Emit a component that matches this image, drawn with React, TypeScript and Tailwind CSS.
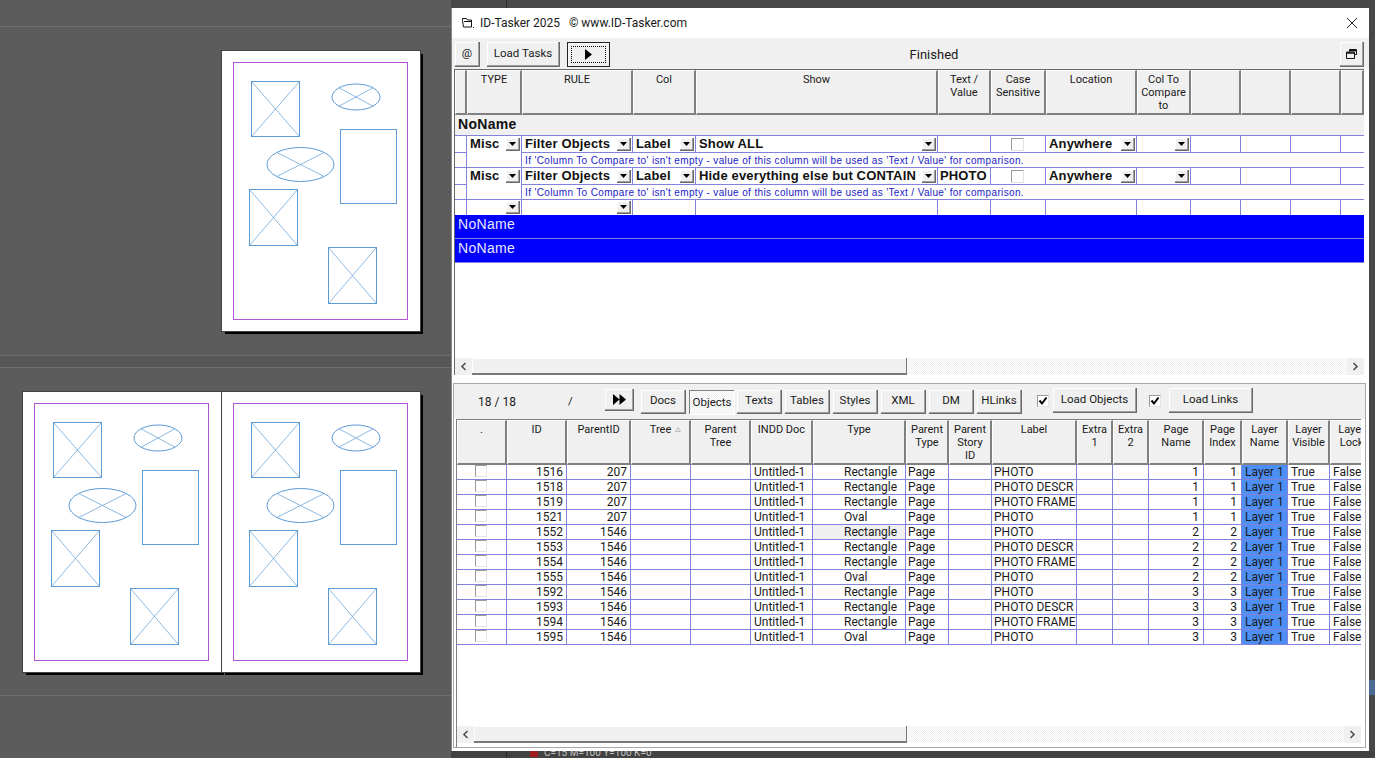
import type { ReactNode } from "react";

const btn =
  "flex items-center justify-center bg-[#f0f0f0] border-r border-b border-[#696969] shadow-[inset_-1px_-1px_0_#a0a0a0,inset_1px_1px_0_#fff]";
const headCell =
  "border-r-2 border-b-2 border-[#808080] border-l border-t border-l-white border-t-white bg-[#f0f0f0] text-center pt-[2px] text-[11px] leading-[13px] text-[#1a1a1a] whitespace-pre-line overflow-hidden";

const topCols = "grid grid-cols-[12px_55px_111px_63px_242px_53px_55px_91px_54px_50px_50px_50px_23px]";
const lowCols = "grid grid-cols-[50px_60px_64px_60px_60px_62px_93px_43px_43px_85px_36px_36px_55px_38px_46px_42px_44px]";

function Arrow() {
  return (
    <span className={`${btn} w-[14px] h-[13px] shrink-0`}>
      <svg width="7" height="4" viewBox="0 0 7 4">
        <path d="M0 0h7L3.5 4z" fill="#000" />
      </svg>
    </span>
  );
}

function Check({ on, big }: { on?: boolean; big?: boolean }) {
  return (
    <span className={`block ${big ? "w-[13px] h-[13px]" : "w-[12px] h-[12px]"} bg-white border-l border-t border-[#9a9a9a] border-r-[#e4e4e4] border-b-[#e4e4e4] border-r border-b`}>
      {on && (
        <svg width="10" height="10" viewBox="0 0 10 10">
          <path d="M1.5 4.5l2.5 3 4.5-6" stroke="#000" strokeWidth="2" fill="none" />
        </svg>
      )}
    </span>
  );
}

function Cell({ children, arrow, cls = "" }: { children?: ReactNode; arrow?: boolean; cls?: string }) {
  return (
    <div className={`flex items-center border-r border-b border-[#8282dc] overflow-hidden ${arrow ? "pr-[1px]" : ""} ${cls}`}>
      <span className="flex-1 whitespace-nowrap overflow-hidden">{children}</span>
      {arrow && <Arrow />}
    </div>
  );
}

function TaskRow({ show, text }: { show: string; text?: string }) {
  return (
    <>
      <div className={`${topCols} h-[17px] text-[13px] font-bold tracking-[0.15px] text-[#111]`}>
        <div className="border-r border-b border-[#8282dc]" />
        <Cell arrow cls="pl-[3px] pb-[1px] border-b-0">Misc</Cell>
        <Cell arrow cls="pl-[3px]">Filter Objects</Cell>
        <Cell arrow cls="pl-[3px]">Label</Cell>
        <Cell arrow cls="pl-[3px]">{show}</Cell>
        <Cell cls="pl-[2px]">{text}</Cell>
        <div className="flex items-center justify-center pr-[2px] border-r border-b border-[#8282dc]"><Check big /></div>
        <Cell arrow cls="pl-[3px]">Anywhere</Cell>
        <Cell arrow />
        <Cell />
        <Cell />
        <Cell />
        <div className="border-b border-[#8282dc]" />
      </div>
      <div className="flex h-[15px] border-b border-[#8282dc]">
        <div className="w-[12px] border-r border-[#8282dc]" />
        <div className="w-[55px] border-r border-[#8282dc]" />
        <div className="pl-[3px] text-[10px] leading-[15px] tracking-[0.36px] text-[#2222c8] whitespace-nowrap">
          If 'Column To Compare to' isn't empty - value of this column will be used as 'Text / Value' for comparison.
        </div>
      </div>
    </>
  );
}

function ScrollBar({ thumb }: { thumb: string }) {
  return (
    <div className="flex h-[17px] shrink-0">
      <span className="w-[17px] flex items-center justify-center bg-[#f0f0f0]">
        <svg width="7" height="9" viewBox="0 0 7 9"><path d="M5.5 1L2 4.5 5.5 8" stroke="#505050" strokeWidth="1.6" fill="none" /></svg>
      </span>
      <span className={`${thumb} bg-[#f0f0f0] border-b-2 border-r border-[#777] shadow-[inset_1px_1px_0_#fff]`} />
      <span className="flex-1 bg-[repeating-conic-gradient(#f0f0f0_0_25%,#fff_0_50%)] bg-[length:2px_2px]" />
      <span className="w-[17px] flex items-center justify-center bg-[#f0f0f0]">
        <svg width="7" height="9" viewBox="0 0 7 9"><path d="M1.5 1L5 4.5 1.5 8" stroke="#505050" strokeWidth="1.6" fill="none" /></svg>
      </span>
    </div>
  );
}

function PageArt({ cls, dx = 0 }: { cls: string; dx?: number }) {
  const box = (x: number, y: number, w: number, h: number) => (
    <g>
      <rect x={x} y={y} width={w} height={h} />
      <path d={`M${x} ${y}L${x + w} ${y + h}M${x + w} ${y}L${x} ${y + h}`} strokeWidth="0.7" />
    </g>
  );
  const oval = (cx: number, cy: number, rx: number, ry: number) => (
    <g>
      <ellipse cx={cx} cy={cy} rx={rx} ry={ry} />
      <path
        d={`M${cx - rx * 0.7} ${cy - ry * 0.7}L${cx + rx * 0.7} ${cy + ry * 0.7}M${cx + rx * 0.7} ${cy - ry * 0.7}L${cx - rx * 0.7} ${cy + ry * 0.7}`}
        strokeWidth="0.7"
      />
    </g>
  );
  return (
    <div className={`absolute w-[198px] h-[280px] bg-white shadow-[3px_3px_0_#000] outline outline-1 outline-[#444] ${cls}`}>
      <svg width="198" height="280" viewBox="0 0 198 280" fill="none">
        <rect x="11.5" y="11.5" width="174" height="257" stroke="#b455d8" />
        <g stroke="#5b9bd5" strokeWidth="1" transform={`translate(${dx} 0)`}>
          {box(29.5, 30.5, 48, 55)}
          {oval(134, 46, 24, 13)}
          <rect x="118.5" y="78.5" width="56" height="74" />
          {oval(78.5, 113.5, 33.5, 17)}
          {box(27.5, 138.5, 48, 56)}
          {box(106.5, 196.5, 48, 56)}
        </g>
      </svg>
    </div>
  );
}

const rows = [
  ["1516", "207", "Rectangle", "PHOTO", "1"],
  ["1518", "207", "Rectangle", "PHOTO DESCR", "1"],
  ["1519", "207", "Rectangle", "PHOTO FRAME", "1"],
  ["1521", "207", "Oval", "PHOTO", "1"],
  ["1552", "1546", "Rectangle", "PHOTO", "2"],
  ["1553", "1546", "Rectangle", "PHOTO DESCR", "2"],
  ["1554", "1546", "Rectangle", "PHOTO FRAME", "2"],
  ["1555", "1546", "Oval", "PHOTO", "2"],
  ["1592", "1546", "Rectangle", "PHOTO", "3"],
  ["1593", "1546", "Rectangle", "PHOTO DESCR", "3"],
  ["1594", "1546", "Rectangle", "PHOTO FRAME", "3"],
  ["1595", "1546", "Oval", "PHOTO", "3"],
];

const lowHeads = [
  ".", "ID", "ParentID", "Tree", "Parent\nTree", "INDD Doc", "Type", "Parent\nType", "Parent\nStory\nID",
  "Label", "Extra\n1", "Extra\n2", "Page\nName", "Page\nIndex", "Layer\nName", "Layer\nVisible", "Layer\nLock",
];

const topHeads = ["", "TYPE", "RULE", "Col", "Show", "Text /\nValue", "Case\nSensitive", "Location", "Col To\nCompare\nto", "", "", "", ""];

const tabs = ["Docs", "Objects", "Texts", "Tables", "Styles", "XML", "DM", "HLinks"];

export default function App() {
  return (
    <div className="relative w-[1375px] h-[758px] overflow-hidden bg-[#5c5c5c] font-['Roboto',Arial,sans-serif] text-[12px] text-[#1a1a1a]">
      {/* pasteboard */}
      <div className="absolute left-0 top-[26px] w-full h-px bg-[#6f6f6f]" />
      <div className="absolute left-0 top-[355px] w-full h-[13px] border-y border-[#6f6f6f] bg-[#565656]" />
      <div className="absolute left-0 top-[695px] w-full h-px bg-[#6f6f6f]" />
      <PageArt cls="left-[222px] top-[51px]" />
      <PageArt cls="left-[23px] top-[392px]" dx={1} />
      <PageArt cls="left-[222px] top-[392px]" />

      {/* panels behind the window */}
      <div className="absolute left-[451px] top-0 w-[924px] h-[8px] bg-[#484848]" />
      <div className="absolute left-[506px] top-0 w-px h-[8px] bg-[#2e2e2e]" />
      <div className="absolute left-[1369px] top-0 w-[6px] h-[758px] bg-[#474747]" />
      <div className="absolute left-[1369px] top-[680px] w-[6px] h-[15px] bg-[#4a6a92]" />
      <div className="absolute left-[451px] top-[751px] w-[924px] h-[7px] bg-[#424242]" />
      <div className="absolute left-[506px] top-[751px] w-px h-[7px] bg-[#2a2a2a]" />
      <div className="absolute left-[530px] top-[746px] flex items-center gap-[6px] text-[10px] leading-[14px] text-[#c4c4c4] whitespace-nowrap">
        <span className="w-[8px] h-[8px] bg-[#a01c1c]" />C=15 M=100 Y=100 K=0
      </div>

      {/* ID-Tasker window */}
      <div className="absolute left-[451px] top-[8px] w-[918px] h-[743px] bg-white flex flex-col border-l border-[#888]">
        <div className="h-[30px] shrink-0 flex items-center bg-white">
          <svg className="ml-[9px] mr-[6px]" width="13" height="12" viewBox="0 0 13 12" fill="none" stroke="#111">
            <path d="M1.5 3.5V1.5h4l1 1.5h4v7h-8l-1-6.5" />
            <path d="M3 4.5h8" />
            <path d="M12 10.5h1" />
          </svg>
          <span className="whitespace-pre">ID-Tasker 2025   © www.ID-Tasker.com</span>
          <svg className="ml-auto mr-[11px]" width="12" height="12" viewBox="0 0 12 12">
            <path d="M1 1l10 10M11 1L1 11" stroke="#222" strokeWidth="1" />
          </svg>
        </div>

        <div className="h-[31px] shrink-0 bg-[#f0f0f0] flex items-start pt-[4px] pl-[3px] pr-[5px] text-[11.5px]">
          <span className={`${btn} w-[25px] h-[25px]`}>@</span>
          <span className={`${btn} w-[73px] h-[25px] ml-[7px]`}>Load Tasks</span>
          <span className="ml-[7px] w-[43px] h-[25px] flex items-center justify-center bg-[#f0f0f0] border border-[#222] shadow-[inset_1px_1px_0_#fff]">
            <span className="w-[35px] h-[17px] flex items-center justify-center border border-dotted border-black">
              <svg width="7" height="11" viewBox="0 0 7 11"><path d="M0 0l7 5.5L0 11z" fill="#000" /></svg>
            </span>
          </span>
          <span className="flex-1 text-center pr-[82px] text-[13px] leading-[25px]">Finished</span>
          <span className={`${btn} w-[24px] h-[25px]`}>
            <svg width="11" height="10" viewBox="0 0 11 10" fill="none" stroke="#111">
              <path d="M3.5 2.5v-2h7v5h-2" />
              <path d="M3 1.5h7" strokeWidth="1.5" />
              <path d="M.5 3h8v6.5h-8z" />
              <path d="M.5 4h8" strokeWidth="1.5" />
            </svg>
          </span>
        </div>

        {/* task grid */}
        <div className="ml-[2px] w-[910px] h-[306px] shrink-0 flex flex-col border-l border-t border-[#696969] font-['Liberation_Sans',Arial,sans-serif]">
          <div className={`${topCols} h-[45px] shrink-0 font-['Roboto',Arial,sans-serif]`}>
            {topHeads.map((h, i) => (
              <div key={i} className={headCell}>{h}</div>
            ))}
          </div>
          <div className="h-[21px] shrink-0 bg-[#f0f0f0] border-b border-[#8282dc] pl-[3px] text-[14px] font-bold leading-[19px] tracking-[0.3px] text-[#111]">NoName</div>
          <TaskRow show="Show ALL" />
          <TaskRow show="Hide everything else but CONTAIN" text="PHOTO" />
          <div className={`${topCols} h-[15px] shrink-0`}>
            <div className="border-r border-[#8282dc]" />
            <Cell arrow cls="border-b-0" />
            <Cell arrow cls="border-b-0" />
            <Cell cls="border-b-0" />
            <Cell cls="border-b-0" />
            <Cell cls="border-b-0" />
            <Cell cls="border-b-0" />
            <Cell cls="border-b-0" />
            <Cell cls="border-b-0" />
            <Cell cls="border-b-0" />
            <Cell cls="border-b-0" />
            <Cell cls="border-b-0" />
            <div />
          </div>
          <div className="h-[24px] shrink-0 bg-[#0000ff] border-b border-[#8282dc] pl-[3px] text-[14px] leading-[18px] tracking-[0.3px] text-[#e8e8ff]">NoName</div>
          <div className="h-[24px] shrink-0 bg-[#0000ff] border-b border-[#8282dc] pl-[3px] text-[14px] leading-[18px] tracking-[0.3px] text-[#e8e8ff]">NoName</div>
          <div className="flex-1" />
          <ScrollBar thumb="w-[435px]" />
        </div>

        {/* objects panel */}
        <div className="mt-[8px] ml-[1px] w-[913px] flex-1 mb-[3px] flex flex-col border border-[#a8a8a8] min-h-0">
          <div className="h-[35px] shrink-0 bg-[#f0f0f0] flex items-center pl-[24px] text-[11.5px]">
            <span className="w-[90px] text-[12px]">18 / 18</span>
            <span className="w-[37px]">/</span>
            <span className={`${btn} w-[29px] h-[22px] mb-[3px]`}>
              <svg width="13" height="11" viewBox="0 0 13 11"><path d="M0 0l6.5 5.5L0 11zM6.5 0L13 5.5 6.5 11z" fill="#000" /></svg>
            </span>
            <span className="flex ml-[7px] gap-[3px]">
              {tabs.map((t) =>
                t === "Objects" ? (
                  <span key={t} className="w-[45px] h-[24px] flex items-center justify-center pt-[2px] bg-[repeating-conic-gradient(#f0f0f0_0_25%,#fff_0_50%)] bg-[length:2px_2px] border-t border-l border-[#808080] shadow-[1px_1px_0_#fff]">{t}</span>
                ) : (
                  <span key={t} className={`${btn} w-[45px] h-[24px]`}>{t}</span>
                ),
              )}
            </span>
            <span className="ml-[15px] mb-[1px]"><Check on /></span>
            <span className={`${btn} w-[84px] h-[25px] ml-[4px] mb-[3px]`}>Load Objects</span>
            <span className="ml-[12px] mb-[1px]"><Check on /></span>
            <span className={`${btn} w-[84px] h-[25px] ml-[8px] mb-[3px]`}>Load Links</span>
          </div>

          <div className="ml-[2px] w-[905px] flex-1 min-h-0 flex flex-col bg-white border-l border-t border-[#808080] overflow-hidden">
            <div className={`${lowCols} h-[45px] shrink-0`}>
              {lowHeads.map((h, i) => (
                <div key={i} className={`${headCell} relative`}>
                  {h}
                  {h === "Tree" && (
                    <svg className="absolute right-[8px] top-[6px]" width="6" height="5" viewBox="0 0 6 5">
                      <path d="M3 .5L5.5 4.5H.5z" fill="none" stroke="#bbb" />
                    </svg>
                  )}
                </div>
              ))}
            </div>
            {rows.map(([id, parent, type, label, page], r) => (
              <div key={id} className={`${lowCols} h-[15px] shrink-0 leading-[14px]`}>
                <Cell><span className="flex justify-center pb-[2px] pr-[2px]"><Check /></span></Cell>
                <Cell cls="text-right pr-[3px]">{id}</Cell>
                <Cell cls="text-right pr-[3px]">{parent}</Cell>
                <Cell />
                <Cell />
                <Cell cls="pl-[3px]">Untitled-1</Cell>
                <Cell cls={`pl-[31px] ${r === 4 ? "bg-[#f0f0f0]" : ""}`}>{type}</Cell>
                <Cell cls="pl-[2px]">Page</Cell>
                <Cell />
                <Cell cls="pl-[2px]">{label}</Cell>
                <Cell />
                <Cell />
                <Cell cls="text-right pr-[4px]">{page}</Cell>
                <Cell cls="text-right pr-[4px]">{page}</Cell>
                <Cell cls="pl-[3px] bg-[#4d8ff5]">Layer 1</Cell>
                <Cell cls="pl-[3px]">True</Cell>
                <Cell cls="pl-[3px] border-r-0">False</Cell>
              </div>
            ))}
            <div className="flex-1" />
            <div className="w-[904px]">
              <ScrollBar thumb="w-[433px]" />
            </div>
            <div className="h-[4px] shrink-0" />
          </div>
        </div>
      </div>
    </div>
  );
}
